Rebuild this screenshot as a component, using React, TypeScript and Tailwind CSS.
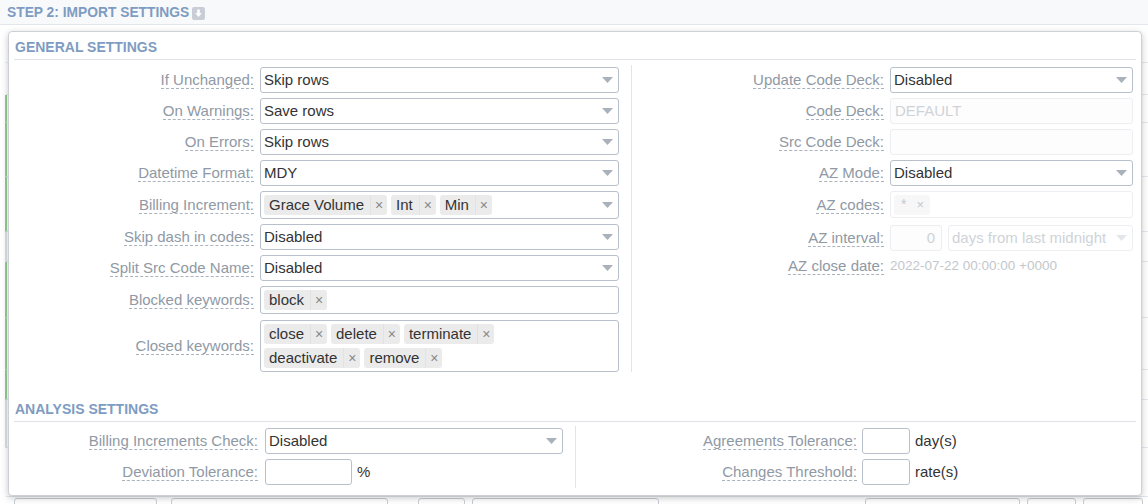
import React from 'react';

// labels with the dashed "help" underline
const LABEL =
  'text-[15px] leading-[17px] text-[#8f99a5] border-b border-dashed border-[#aab2bc] whitespace-nowrap';

function Arrow({ light }: { light?: boolean }) {
  return (
    <svg width="11" height="6" viewBox="0 0 11 6" className="shrink-0">
      <path d="M0 0h11L5.5 6z" fill={light ? '#e3e6ea' : '#a9b1bb'} />
    </svg>
  );
}

function Select({ value, disabled, className = '' }: { value: string; disabled?: boolean; className?: string }) {
  return (
    <div
      className={`h-[26px] flex items-center justify-between rounded-[3px] border bg-white pl-[3px] pr-[5px] text-[15px] ${
        disabled ? 'border-[#eceef1] text-[#cfd3d8]' : 'border-[#b8c1cb] text-[#333]'
      } ${className}`}
    >
      <span className="truncate">{value}</span>
      <Arrow light={disabled} />
    </div>
  );
}

function Input({ value = '', disabled, className = '', right }: { value?: string; disabled?: boolean; className?: string; right?: boolean }) {
  return (
    <div
      className={`h-[26px] flex items-center rounded-[3px] border px-[4px] text-[15px] ${right ? 'justify-end' : ''} ${
        disabled ? 'border-[#eceef1] bg-[#fdfdfd] text-[#cfd3d8]' : 'border-[#b8c1cb] bg-white text-[#333]'
      } ${className}`}
    >
      {value}
    </div>
  );
}

function Tag({ text, disabled }: { text: string; disabled?: boolean }) {
  return (
    <span
      className={`inline-flex h-[20px] items-stretch rounded-[3px] ${
        disabled ? 'bg-[#f7f7f8] text-[#c4c8cd]' : 'bg-[#ebebeb] text-[#333]'
      }`}
    >
      <span className="pl-[5px] pr-[6px] text-[15px] leading-[20px]">{text}</span>
      <span
        className={`flex w-[17px] items-center justify-center border-l text-[14px] ${
          disabled ? 'border-[#f7f7f8] text-[#c4c8cd]' : 'border-[#e2e2e2] text-[#888]'
        }`}
      >
        ×
      </span>
    </span>
  );
}

function Tags({ items, className = '', disabled }: { items: string[]; className?: string; disabled?: boolean }) {
  return (
    <div
      className={`flex flex-wrap gap-x-[4px] gap-y-[4px] rounded-[3px] border p-[3px] ${
        disabled ? 'border-[#eceef1]' : 'border-[#b8c1cb]'
      } ${className}`}
    >
      {items.map((t) => (
        <Tag key={t} text={t} disabled={disabled} />
      ))}
    </div>
  );
}

function Row({ label, width, gap, children }: { label: string; width: string; gap: string; children: React.ReactNode }) {
  return (
    <div className={`flex items-center ${gap}`}>
      <div className={`flex shrink-0 justify-end ${width}`}>
        <span className={LABEL}>{label}</span>
      </div>
      {children}
    </div>
  );
}

function Heading({ children }: { children: React.ReactNode }) {
  return (
    <div className="border-b border-[#dfe3e8] pb-[3px] pl-[1px] text-[14px] font-bold leading-[17px] text-[#7e9cc2]">
      {children}
    </div>
  );
}

export default function App() {
  const bgRows = [
    { h: 'h-[38px]', c: 'border-l-transparent' },
    { h: 'h-[32px]', c: 'border-l-transparent' },
    { h: 'h-[28px]', c: 'border-l-[#8fd08f]' },
    { h: 'h-[54px]', c: 'border-l-[#8fd08f]' },
    { h: 'h-[55px]', c: 'border-l-[#8fd08f]' },
    { h: 'h-[30px]', c: 'border-l-[#dcdfe3]' },
    { h: 'h-[56px]', c: 'border-l-[#8fd08f]' },
    { h: 'h-[52px]', c: 'border-l-[#8fd08f]' },
    { h: 'h-[30px]', c: 'border-l-[#8fd08f]' },
    { h: 'h-[48px]', c: 'border-l-[#dcdfe3]' },
    { h: 'h-[49px]', c: 'border-l-transparent' },
  ];

  return (
    <div className="relative h-[504px] w-[1148px] overflow-hidden bg-white font-['Liberation_Sans',Arial,sans-serif]">
      {/* page behind the popup */}
      <div className="flex h-[25px] items-center gap-[3px] border-b border-[#e3e6ea] bg-[#f8f9fb] pl-[7px] pt-[2px]">
        <span className="text-[13.8px] font-bold text-[#7e9cc2]">STEP 2: IMPORT SETTINGS</span>
        <svg width="13" height="13" viewBox="0 0 13 13">
          <rect width="13" height="13" rx="2" fill="#c9ced6" />
          <path d="M5.2 2.5h2.6v3.5h2L6.5 10 3.2 6h2z" fill="#fff" />
        </svg>
      </div>
      <div className="pl-[5px]">
        {bgRows.map((r, i) => (
          <div key={i} className={`${r.h} border-b border-l-2 border-b-[#e4e9ef] ${r.c}`} />
        ))}
        <div className="flex gap-[7px] pl-[9px] pt-[1px]">
          <div className="h-[20px] w-[143px] rounded-[3px] border border-[#c9ced4]" />
          <div className="ml-[7px] h-[20px] w-[217px] rounded-[3px] border border-[#c9ced4]" />
          <div className="ml-[23px] h-[20px] w-[47px] rounded-[3px] border border-[#c9ced4]" />
          <div className="h-[20px] w-[187px] rounded-[3px] border border-[#c9ced4]" />
          <div className="ml-[199px] h-[20px] w-[155px] rounded-[3px] border border-[#c9ced4]" />
          <div className="h-[20px] w-[49px] rounded-[3px] border border-[#c9ced4]" />
          <div className="h-[20px] w-[60px] rounded-[3px] border border-[#c9ced4]" />
        </div>
      </div>

      {/* import settings popup */}
      <div className="absolute left-[8px] top-[31px] h-[465px] w-[1134px] rounded-[4px] border border-[#cdd1d6] bg-white px-[5px] pt-[7px] shadow-[0_2px_7px_rgba(0,0,0,0.22)]">
        <Heading>GENERAL SETTINGS</Heading>

        <div className="mt-[5px] flex">
          <div className="flex w-[605px] flex-col gap-[5px] pt-[2px]">
            <Row label="If Unchanged:" width="w-[240px]" gap="gap-[6px]">
              <Select value="Skip rows" className="w-[359px]" />
            </Row>
            <Row label="On Warnings:" width="w-[240px]" gap="gap-[6px]">
              <Select value="Save rows" className="w-[359px]" />
            </Row>
            <Row label="On Errors:" width="w-[240px]" gap="gap-[6px]">
              <Select value="Skip rows" className="w-[359px]" />
            </Row>
            <Row label="Datetime Format:" width="w-[240px]" gap="gap-[6px]">
              <Select value="MDY" className="w-[359px]" />
            </Row>
            <Row label="Billing Increment:" width="w-[240px]" gap="gap-[6px]">
              <div className="flex h-[28px] w-[359px] items-center justify-between rounded-[3px] border border-[#b8c1cb] pl-[3px] pr-[5px]">
                <div className="flex gap-[4px]">
                  <Tag text="Grace Volume" />
                  <Tag text="Int" />
                  <Tag text="Min" />
                </div>
                <Arrow />
              </div>
            </Row>
            <Row label="Skip dash in codes:" width="w-[240px]" gap="gap-[6px]">
              <Select value="Disabled" className="w-[359px]" />
            </Row>
            <Row label="Split Src Code Name:" width="w-[240px]" gap="gap-[6px]">
              <Select value="Disabled" className="w-[359px]" />
            </Row>
            <Row label="Blocked keywords:" width="w-[240px]" gap="gap-[6px]">
              <Tags items={['block']} className="h-[28px] w-[359px]" />
            </Row>
            <div className="mt-[1px]">
              <Row label="Closed keywords:" width="w-[240px]" gap="gap-[6px]">
                <Tags items={['close', 'delete', 'terminate', 'deactivate', 'remove']} className="w-[359px] pr-[120px]" />
              </Row>
            </div>
          </div>

          <div className="ml-[12px] w-px bg-[#dfe5ec]" />

          <div className="flex w-[501px] flex-col gap-[5px] pt-[2px]">
            <Row label="Update Code Deck:" width="w-[252px]" gap="gap-[6px]">
              <Select value="Disabled" className="w-[243px]" />
            </Row>
            <Row label="Code Deck:" width="w-[252px]" gap="gap-[6px]">
              <Input value="DEFAULT" disabled className="w-[243px] text-[14px]" />
            </Row>
            <Row label="Src Code Deck:" width="w-[252px]" gap="gap-[6px]">
              <Input disabled className="w-[243px]" />
            </Row>
            <Row label="AZ Mode:" width="w-[252px]" gap="gap-[6px]">
              <Select value="Disabled" className="w-[243px]" />
            </Row>
            <Row label="AZ codes:" width="w-[252px]" gap="gap-[6px]">
              <div className="flex h-[27px] w-[243px] items-center rounded-[3px] border border-[#eceef1] pl-[3px]">
                <span className="inline-flex h-[20px] items-center gap-[10px] rounded-[3px] bg-[#f7f7f8] pl-[7px] pr-[6px] text-[14px] text-[#c4c8cd]">
                  <span>*</span>
                  <span className="text-[13px]">×</span>
                </span>
              </div>
            </Row>
            <div className="mt-[2px]">
              <Row label="AZ interval:" width="w-[252px]" gap="gap-[6px]">
                <div className="flex gap-[6px]">
                  <Input value="0" disabled right className="w-[52px] pr-[6px]" />
                  <Select value="days from last midnight" disabled className="w-[185px]" />
                </div>
              </Row>
            </div>
            <Row label="AZ close date:" width="w-[252px]" gap="gap-[6px]">
              <span className="text-[13.5px] text-[#c3c7cc]">2022-07-22 00:00:00 +0000</span>
            </Row>
          </div>
        </div>

        <div className="mt-[29px]">
          <Heading>ANALYSIS SETTINGS</Heading>
        </div>

        <div className="mt-[4px] flex">
          <div className="flex w-[549px] flex-col gap-[5px] pt-[2px]">
            <Row label="Billing Increments Check:" width="w-[244px]" gap="gap-[7px]">
              <Select value="Disabled" className="w-[298px]" />
            </Row>
            <Row label="Deviation Tolerance:" width="w-[244px]" gap="gap-[7px]">
              <div className="flex items-center gap-[5px]">
                <Input className="w-[87px]" />
                <span className="text-[15px] text-[#333]">%</span>
              </div>
            </Row>
          </div>

          <div className="ml-[12px] h-[62px] w-px bg-[#dfe5ec]" />

          <div className="flex flex-col gap-[5px] pt-[2px]">
            <Row label="Agreements Tolerance:" width="w-[281px]" gap="gap-[5px]">
              <div className="flex items-center gap-[5px]">
                <Input className="w-[48px]" />
                <span className="text-[15px] text-[#333]">day(s)</span>
              </div>
            </Row>
            <Row label="Changes Threshold:" width="w-[281px]" gap="gap-[5px]">
              <div className="flex items-center gap-[5px]">
                <Input className="w-[48px]" />
                <span className="text-[15px] text-[#333]">rate(s)</span>
              </div>
            </Row>
          </div>
        </div>
      </div>
    </div>
  );
}
